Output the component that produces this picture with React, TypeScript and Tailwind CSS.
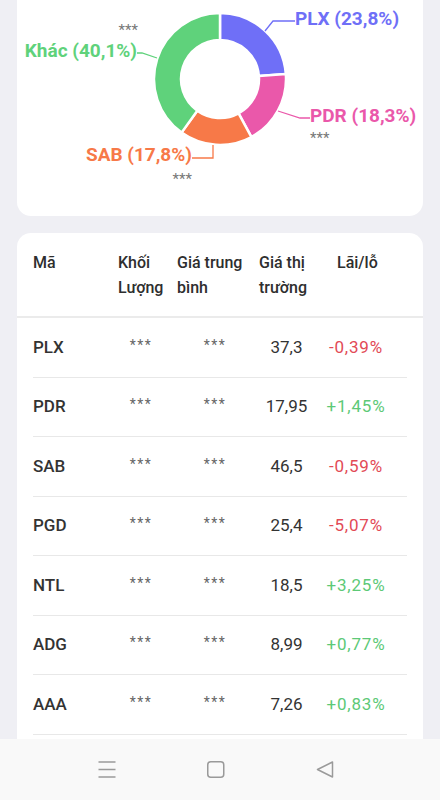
import React from 'react'

interface Slice {
  name: string
  pct: number
  color: string
}

interface Holding {
  code: string
  price: string
  change: string
  up: boolean
}

const slices: Slice[] = [
  { name: 'PLX', pct: 23.8, color: '#6f6ff7' },
  { name: 'PDR', pct: 18.3, color: '#ea58aa' },
  { name: 'SAB', pct: 17.8, color: '#f77948' },
  { name: 'Khác', pct: 40.1, color: '#5fd27b' },
]

const holdings: Holding[] = [
  { code: 'PLX', price: '37,3', change: '-0,39%', up: false },
  { code: 'PDR', price: '17,95', change: '+1,45%', up: true },
  { code: 'SAB', price: '46,5', change: '-0,59%', up: false },
  { code: 'PGD', price: '25,4', change: '-5,07%', up: false },
  { code: 'NTL', price: '18,5', change: '+3,25%', up: true },
  { code: 'ADG', price: '8,99', change: '+0,77%', up: true },
  { code: 'AAA', price: '7,26', change: '+0,83%', up: true },
]

const CX = 203
const CY = 79
const R_OUT = 66
const R_IN = 39

const pt = (r: number, deg: number) => {
  const a = (deg * Math.PI) / 180
  return [CX + r * Math.sin(a), CY - r * Math.cos(a)]
}

const arcPath = (start: number, end: number) => {
  const [x1, y1] = pt(R_OUT, start)
  const [x2, y2] = pt(R_OUT, end)
  const [x3, y3] = pt(R_IN, end)
  const [x4, y4] = pt(R_IN, start)
  const large = end - start > 180 ? 1 : 0
  return `M${x1} ${y1} A${R_OUT} ${R_OUT} 0 ${large} 1 ${x2} ${y2} L${x3} ${y3} A${R_IN} ${R_IN} 0 ${large} 0 ${x4} ${y4} Z`
}

function Donut() {
  let acc = 0
  const arcs = slices.map((s) => {
    const start = acc
    acc += (s.pct / 100) * 360
    return { ...s, start, end: acc }
  })

  return (
    <svg width="406" height="216" viewBox="0 0 406 216" className="block">
      {arcs.map((a) => (
        <path key={a.name} d={arcPath(a.start, a.end)} fill={a.color} stroke="#ffffff" strokeWidth="2.5" strokeLinejoin="round" />
      ))}

      {/* leader lines */}
      <polyline points="248,31 256,21 278,21" fill="none" stroke="#6f6ff7" strokeWidth="1.3" />
      <polyline points="261,111 283,118 293,118" fill="none" stroke="#ea58aa" strokeWidth="1.3" />
      <polyline points="196,145 196,158 175,158" fill="none" stroke="#f77948" strokeWidth="1.3" />
      <polyline points="140,58 125,53 120,53" fill="none" stroke="#5fd27b" strokeWidth="1.3" />

      <g style={{ fontFamily: 'Roboto, "Noto Sans", sans-serif', fontWeight: 700, fontSize: 19 }}>
        <text x="278" y="25" fill="#6f6ff7">PLX (23,8%)</text>
        <text x="293" y="121.5" fill="#ea58aa">PDR (18,3%)</text>
        <text x="175" y="161" fill="#f77948" textAnchor="end">SAB (17,8%)</text>
        <text x="120" y="57" fill="#5fd27b" textAnchor="end">Khác (40,1%)</text>
      </g>
      <g style={{ fontFamily: 'Roboto, "Noto Sans", sans-serif', fontSize: 15 }} fill="#777777">
        <text x="121" y="35" textAnchor="end">***</text>
        <text x="293" y="143">***</text>
        <text x="175" y="184" textAnchor="end">***</text>
      </g>
    </svg>
  )
}

export default function App() {
  return (
    <div className="h-screen flex flex-col bg-[#efeff4] overflow-hidden" style={{ fontFamily: 'Roboto, "Noto Sans", sans-serif' }}>
      <div className="flex-1 flex flex-col overflow-hidden px-[17px]">
        {/* Allocation chart */}
        <div className="bg-white rounded-b-[14px]">
          <Donut />
        </div>

        {/* Holdings table */}
        <div className="flex-1 mt-[17px] bg-white rounded-t-[14px]">
          <div className="flex pt-[17px] pb-[16px] px-4 border-b-2 border-[#ebebeb] text-[16px] leading-[25px] font-medium text-[#2e2e2e]">
            <div className="w-[77px]">Mã</div>
            <div className="w-[62px] pl-[8px]">Khối<br />Lượng</div>
            <div className="w-[86px] pl-[5px]">Giá trung<br />bình</div>
            <div className="w-[57px] pl-[1px]">Giá thị<br />trường</div>
            <div className="flex-1 pl-[22px]">Lãi/lỗ</div>
          </div>

          <div className="px-4">
            {holdings.map((h) => (
              <div key={h.code} className="flex items-center h-[59.5px] border-b border-[#e8e8e8] text-[17px] text-[#333]">
                <div className="w-[77px] font-medium">{h.code}</div>
                <div className="w-[62px] text-center text-[14px] tracking-[1.5px] text-[#666] -mt-[4px]">***</div>
                <div className="w-[86px] text-center text-[14px] tracking-[1.5px] text-[#666] -mt-[4px]">***</div>
                <div className="w-[57px] text-center">{h.price}</div>
                <div className={`w-[82px] text-center tracking-[0.8px] ${h.up ? 'text-[#5dc977]' : 'text-[#e24a56]'}`}>{h.change}</div>
              </div>
            ))}
          </div>
        </div>
      </div>

      {/* System navigation bar */}
      <div className="h-[61px] shrink-0 bg-[#f9f9f9] flex items-center justify-center gap-[91px] pr-[9px]">
        <svg width="18" height="17" viewBox="0 0 18 17">
          <path d="M0.5 1h17M0.5 8.5h17M0.5 16h17" stroke="#9a9a9a" strokeWidth="1.5" fill="none" />
        </svg>
        <svg width="18" height="17" viewBox="0 0 18 17">
          <rect x="0.75" y="0.75" width="16" height="15.5" rx="3" stroke="#9a9a9a" strokeWidth="1.5" fill="none" />
        </svg>
        <svg width="18" height="17" viewBox="0 0 18 17">
          <path d="M16.5 1 L1.5 8.5 L16.5 16 Z" stroke="#9a9a9a" strokeWidth="1.5" strokeLinejoin="round" fill="none" />
        </svg>
      </div>
    </div>
  )
}
